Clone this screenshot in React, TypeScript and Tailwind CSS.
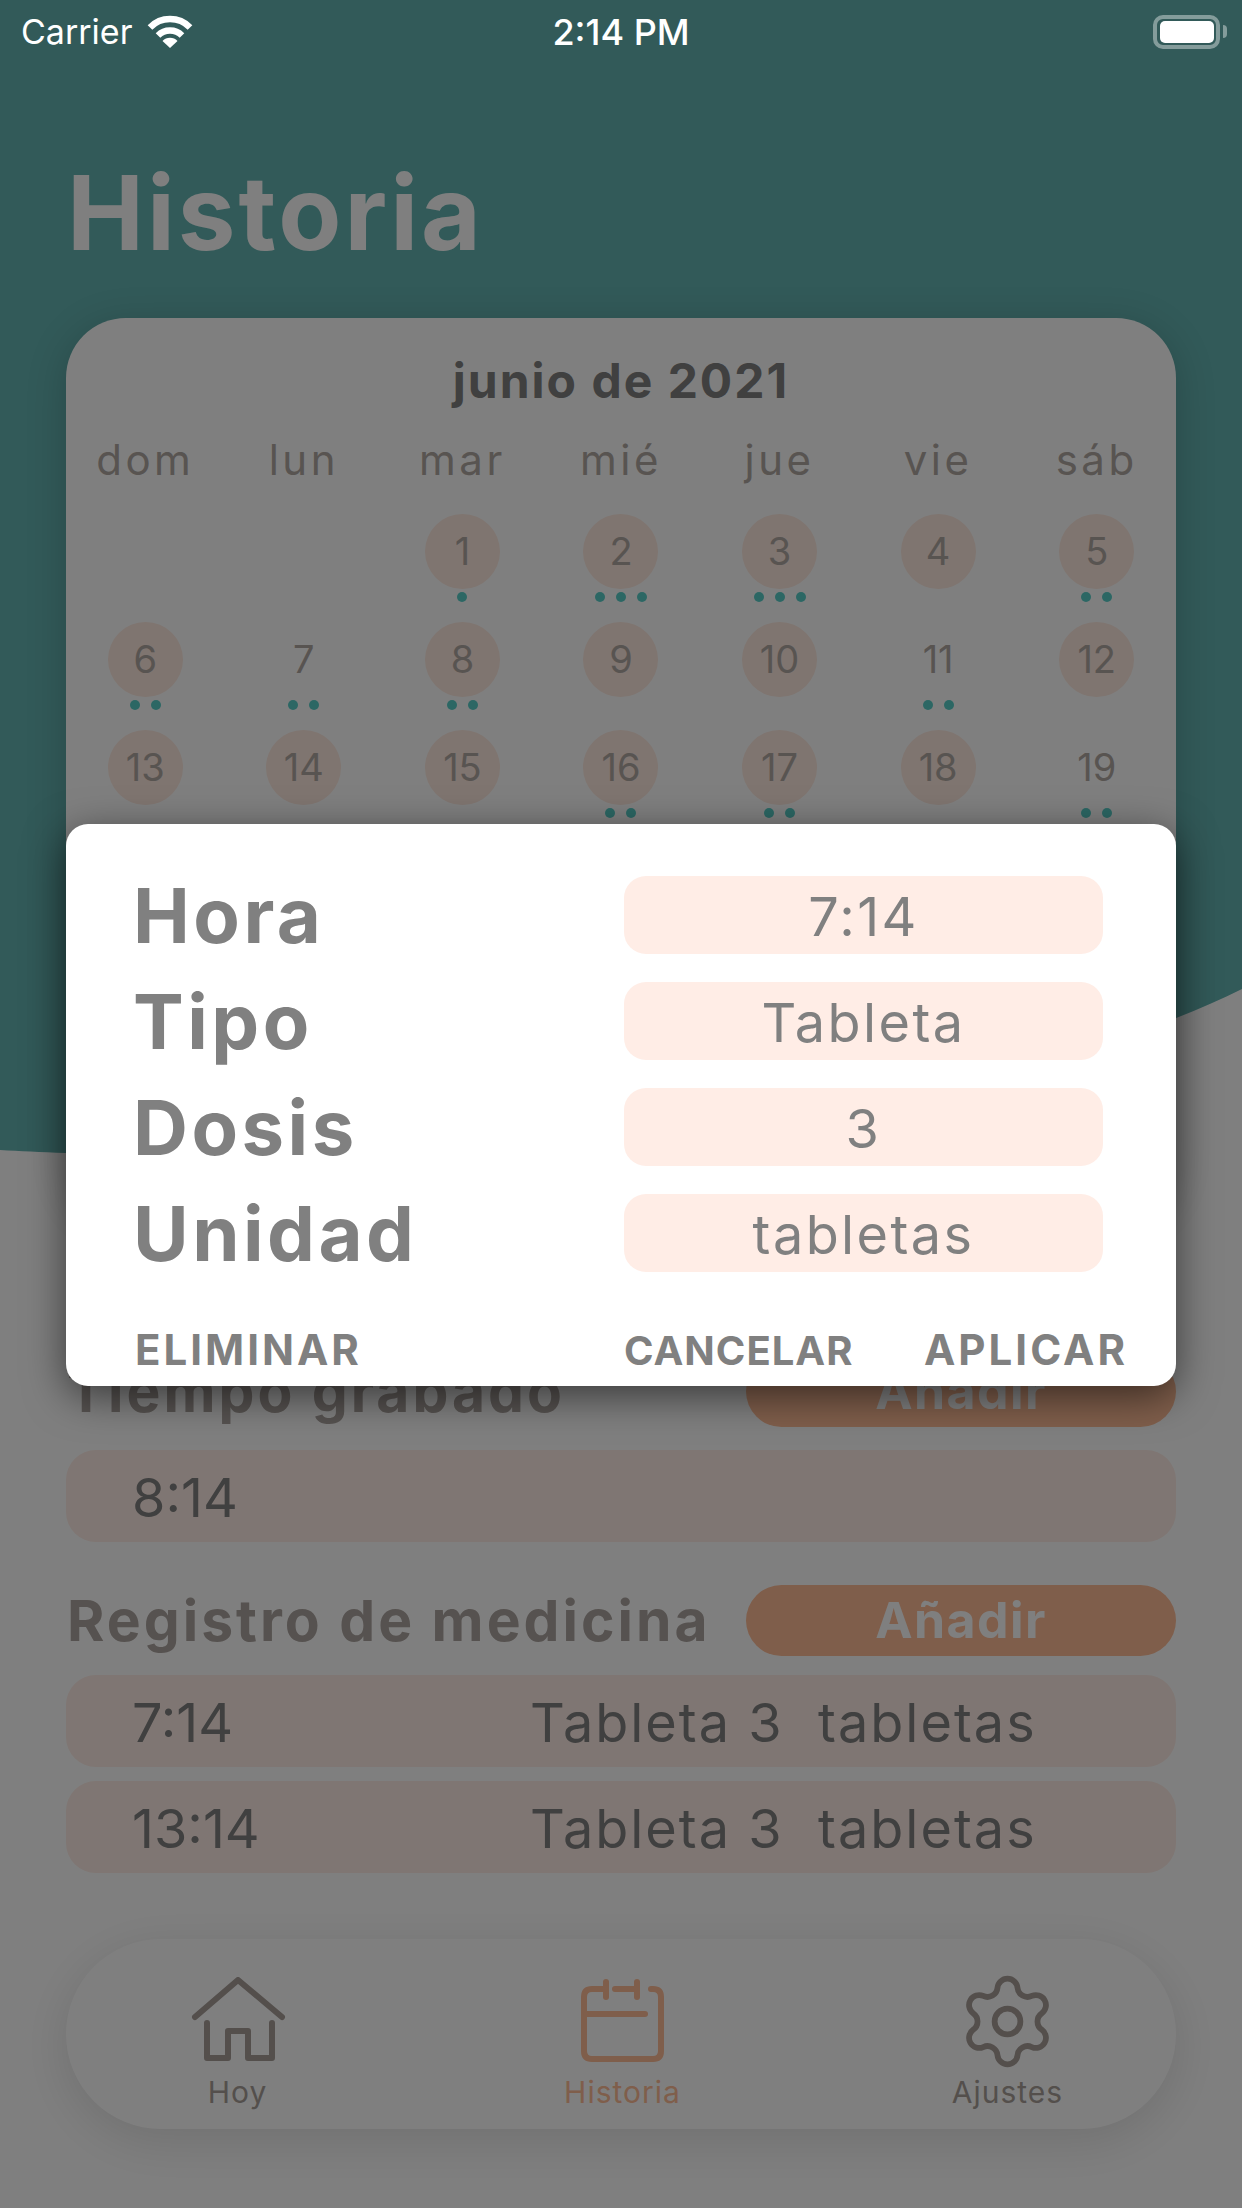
import { Settings } from 'lucide-react'

const weekdays = ['dom', 'lun', 'mar', 'mié', 'jue', 'vie', 'sáb']

// day of june 2021, whether it has a filled circle, number of dots under it
const days = [
  { day: 1, filled: true, dots: 1 },
  { day: 2, filled: true, dots: 3 },
  { day: 3, filled: true, dots: 3 },
  { day: 4, filled: true, dots: 0 },
  { day: 5, filled: true, dots: 2 },
  { day: 6, filled: true, dots: 2 },
  { day: 7, filled: false, dots: 2 },
  { day: 8, filled: true, dots: 2 },
  { day: 9, filled: true, dots: 0 },
  { day: 10, filled: true, dots: 0 },
  { day: 11, filled: false, dots: 2 },
  { day: 12, filled: true, dots: 0 },
  { day: 13, filled: true, dots: 0 },
  { day: 14, filled: true, dots: 0 },
  { day: 15, filled: true, dots: 0 },
  { day: 16, filled: true, dots: 2 },
  { day: 17, filled: true, dots: 2 },
  { day: 18, filled: true, dots: 0 },
  { day: 19, filled: false, dots: 2 },
]

const fields = [
  { label: 'Hora', value: '7:14' },
  { label: 'Tipo', value: 'Tableta' },
  { label: 'Dosis', value: '3' },
  { label: 'Unidad', value: 'tabletas' },
]

function WifiIcon() {
  return (
    <svg width="46" height="34" viewBox="0 0 46 34" className="ml-[15px]">
      <path d="M3 12.5 A28 28 0 0 1 43 12.5" fill="none" stroke="white" strokeWidth="6.5" />
      <path d="M11 20.5 A17 17 0 0 1 35 20.5" fill="none" stroke="white" strokeWidth="6.5" />
      <path d="M23 33 L15.5 26 A10.5 10.5 0 0 1 30.5 26 Z" fill="white" />
    </svg>
  )
}

function BatteryIcon() {
  return (
    <div className="flex items-center">
      <div className="flex h-[34px] w-[67px] items-center justify-center rounded-[10px] border-[4px] border-white/40">
        <div className="h-[22px] w-[54px] rounded-[5px] bg-white" />
      </div>
      <div className="ml-[3px] h-[13px] w-[4px] rounded-r-full bg-white/40" />
    </div>
  )
}

function HomeIcon() {
  return (
    <svg width="96" height="88" viewBox="30 19 96 88" fill="none" stroke="#a89f99" strokeWidth="6" strokeLinecap="round" strokeLinejoin="round">
      <path d="M35 59 L78 22 L122 59" />
      <path d="M47 65 V100 H68 V73 H88 V100 H112 V65" />
    </svg>
  )
}

function CalendarIcon() {
  return (
    <svg width="86" height="86" viewBox="36 19 86 86" fill="none" stroke="#ffbc96" strokeWidth="6" strokeLinecap="round" strokeLinejoin="round">
      <path d="M60 30 H48 Q40 30 40 38 V92 Q40 100 48 100 H109 Q117 100 117 92 V38 Q117 30 109 30 H107" />
      <path d="M71 30 H91" />
      <path d="M62 23 V38" />
      <path d="M93 23 V38" />
      <path d="M42 55 H101" />
    </svg>
  )
}

function Day({ day, filled, dots }: { day: number; filled: boolean; dots: number }) {
  return (
    <div className="flex h-[108px] flex-col items-center">
      <div className={`flex h-[75px] w-[75px] items-center justify-center rounded-full text-[38px] text-[#b0a8a3] ${filled ? 'bg-[#ffeae0]' : ''}`}>
        {day}
      </div>
      <div className="mt-[3px] flex h-[10px] gap-[11px]">
        {Array.from({ length: dots }).map((_, i) => (
          <div key={i} className="h-[10px] w-[10px] rounded-full bg-[#58cfc9]" />
        ))}
      </div>
    </div>
  )
}

function SectionHeader({ title }: { title: string }) {
  return (
    <div className="flex h-[71px] items-center justify-between">
      <h2 className="pl-[1px] text-[57px] leading-none font-bold tracking-[3px] whitespace-nowrap text-[#ada5a0]">{title}</h2>
      <button className="flex h-[71px] w-[430px] items-center justify-center rounded-[36px] bg-[#ffbc96] text-[50px] font-bold tracking-[1.4px] text-white">
        Añadir
      </button>
    </div>
  )
}

function Row({ time, detail }: { time: string; detail?: string }) {
  return (
    <div className="flex h-[92px] items-center rounded-[30px] bg-[#ffede6] pt-[2px] pl-[66px] text-[54px] text-[#808080]">
      <span className="w-[398px]">{time}</span>
      {detail && <span className="tracking-[2px] whitespace-pre">{detail}</span>}
    </div>
  )
}

function TabItem({ label, active, children }: { label: string; active?: boolean; children: React.ReactNode }) {
  return (
    <div className="flex flex-col items-center">
      <div className="flex h-[92px] items-center">{children}</div>
      <span className={`mt-[7px] text-[30px] leading-[36px] tracking-[1px] ${active ? 'text-[#ffbc96]' : 'text-[#a89f99]'}`}>{label}</span>
    </div>
  )
}

export default function App() {
  return (
    <div className="relative h-[2208px] w-full overflow-hidden bg-white font-['Inter',sans-serif]">
      {/* teal wave behind the calendar */}
      <svg className="absolute top-0 left-0" width="1242" height="1160" viewBox="0 0 1242 1160">
        <path d="M0 0 H1242 V989 C1000 1110 500 1170 66 1153 C40 1152 20 1151 0 1150 Z" fill="#64b4b2" />
      </svg>

      {/* status bar stays bright above the dimming layer */}
      <div className="relative z-30 grid h-[60px] grid-cols-3 items-center px-[21px] pt-[3px] text-white">
        <div className="flex items-center text-[34px]">
          Carrier
          <WifiIcon />
        </div>
        <div className="text-center text-[36px] font-medium">2:14 PM</div>
        <div className="-mr-[6px] flex justify-end">
          <BatteryIcon />
        </div>
      </div>

      <div className="relative px-[66px]">
        <h1 className="mt-[93px] h-[120px] pl-[1px] text-[103px] leading-[120px] font-bold tracking-[3px] text-white">Historia</h1>

        {/* calendar, its lower rows sit behind the dialog */}
        <div className="mt-[45px] h-[900px] rounded-[60px] bg-white pt-[32px] shadow-[0_8px_40px_rgba(0,0,0,0.2)]">
          <div className="h-[62px] text-center text-[48px] leading-[62px] font-bold tracking-[2px] text-[#808080]">junio de 2021</div>
          <div className="mt-[23px] grid h-[50px] grid-cols-7 text-center text-[42px] leading-[50px] tracking-[3.5px] text-[#b0a8a3]">
            {weekdays.map((name) => (
              <div key={name}>{name}</div>
            ))}
          </div>
          <div className="mt-[29px] grid grid-cols-7">
            <div />
            <div />
            {days.map((d) => (
              <Day key={d.day} {...d} />
            ))}
          </div>
        </div>

        <div className="mt-[138px]">
          <SectionHeader title="Tiempo grabado" />
          <div className="mt-[23px]">
            <Row time="8:14" />
          </div>
        </div>

        <div className="mt-[43px]">
          <SectionHeader title="Registro de medicina" />
          <div className="mt-[19px] flex flex-col gap-[14px]">
            <Row time="7:14" detail="Tableta 3  tabletas" />
            <Row time="13:14" detail="Tableta 3  tabletas" />
          </div>
        </div>

        {/* tab bar */}
        <div className="mt-[66px] grid h-[190px] grid-cols-[repeat(3,385px)] justify-center rounded-[95px] bg-white pt-[36px] pl-[3px] shadow-[0_12px_50px_rgba(0,0,0,0.12)]">
          <TabItem label="Hoy">
            <HomeIcon />
          </TabItem>
          <TabItem label="Historia" active>
            <CalendarIcon />
          </TabItem>
          <TabItem label="Ajustes">
            <Settings size={103} strokeWidth={1.35} color="#a89f99" />
          </TabItem>
        </div>
      </div>

      {/* dimming layer and dialog */}
      <div className="absolute inset-0 z-20 flex items-center justify-center bg-black/50 pt-[2px]">
        <div className="h-[562px] w-[1110px] rounded-[22px] bg-white pt-[52px] pl-[67px] shadow-[0_10px_40px_rgba(0,0,0,0.55)]">
          <div className="flex flex-col gap-[28px]">
            {fields.map((f) => (
              <div key={f.label} className="grid h-[78px] grid-cols-[491px_479px] items-center">
                <span className="text-[76px] leading-none font-bold tracking-[3.5px] text-[#808080]">{f.label}</span>
                <div className="flex h-[78px] items-center justify-center rounded-[22px] bg-[#ffede6] pt-[3px] text-[54px] tracking-[2.4px] text-[#808080]">
                  {f.value}
                </div>
              </div>
            ))}
          </div>
          <div className="mt-[46px] grid h-[50px] grid-cols-[491px_504px] items-center text-[42px] font-bold tracking-[3px] text-[#808080]">
            <span className="pl-[2px]">ELIMINAR</span>
            <div className="flex items-center justify-between">
              <span className="pt-[3px] text-[40px] tracking-[1px]">CANCELAR</span>
              <span>APLICAR</span>
            </div>
          </div>
        </div>
      </div>
    </div>
  )
}
